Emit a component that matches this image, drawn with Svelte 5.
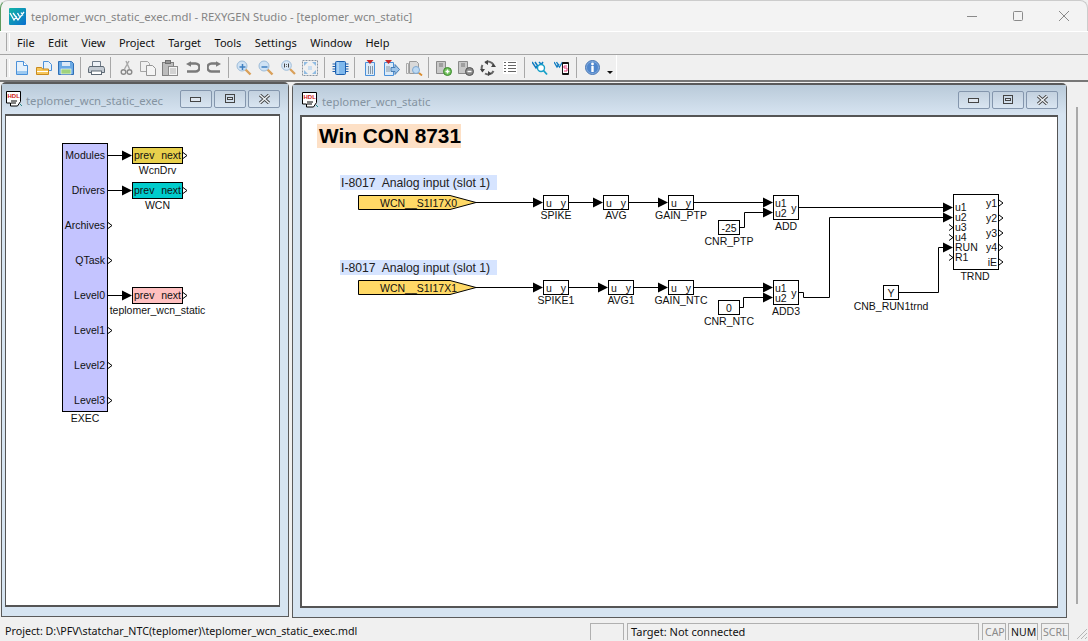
<script>
  const menus = ['File', 'Edit', 'View', 'Project', 'Target', 'Tools', 'Settings', 'Window', 'Help'];

  // task tree on the left window, coordinates are the sheet's own
  const execPins = [
    ['Modules', 155.5], ['Drivers', 190.5], ['Archives', 225.5], ['QTask', 260.5],
    ['Level0', 295.5], ['Level1', 330.5], ['Level2', 365.5], ['Level3', 400.5]
  ];
  const tasks = [
    { name: 'WcnDrv', y: 147.5, fill: '#e8d04c' },
    { name: 'WCN', y: 182.5, fill: '#00cccc' },
    { name: 'teplomer_wcn_static', y: 287.5, fill: '#ffc0c0' }
  ];

  // u/y function blocks
  const blocks = [
    { name: 'SPIKE', x: 543.5, y: 195.5 },
    { name: 'AVG', x: 603.5, y: 195.5 },
    { name: 'GAIN_PTP', x: 668.5, y: 195.5 },
    { name: 'SPIKE1', x: 543.5, y: 280.5 },
    { name: 'AVG1', x: 608.5, y: 280.5 },
    { name: 'GAIN_NTC', x: 668.5, y: 280.5 }
  ];
  const adders = [
    { name: 'ADD', y: 195.5 },
    { name: 'ADD3', y: 280.5 }
  ];
  const constants = [
    { name: 'CNR_PTP', value: '-25', x: 718.5, y: 220.5, w: 21 },
    { name: 'CNR_NTC', value: '0', x: 718.5, y: 300.5, w: 21 },
    { name: 'CNB_RUN1trnd', value: 'Y', x: 883.5, y: 285.5, w: 15 }
  ];
  const inputs = [
    { name: 'WCN__S1I17X0', y: 195.5, rowY: 175 },
    { name: 'WCN__S1I17X1', y: 280.5, rowY: 260 }
  ];
  const wires = [
    'M476 202.5H533', 'M569 202.5H593', 'M629 202.5H658', 'M694 202.5H763',
    'M739 227.5H744.5V212.5H763', 'M799 207.5H943',
    'M476 287.5H533', 'M569 287.5H598', 'M634 287.5H658', 'M694 287.5H763',
    'M739 307.5H743.5V297.5H763', 'M799 292.5H803.5V297.5H829.5V217.5H943',
    'M899 292.5H938.5V247.5H943'
  ];
  const arrows = [
    [543, 202.5], [603, 202.5], [668, 202.5], [773, 202.5], [773, 212.5],
    [543, 287.5], [608, 287.5], [668, 287.5], [773, 287.5], [773, 297.5],
    [953, 207.5], [953, 217.5], [953, 247.5]
  ];
  const trndIn = [['u1', 207.5], ['u2', 217.5], ['u3', 227.5], ['u4', 237.5], ['RUN', 247.5], ['R1', 257.5]];
  const trndOut = [['y1', 203], ['y2', 218], ['y3', 233], ['y4', 247.5], ['iE', 262]];
</script>

{#snippet hdl()}
  <svg class="hdl" width="16" height="16" viewBox="0 0 16 16">
    <path d="M.5.5h14v10l-3 4.5H4.500v-3H.5z" fill="#fff" stroke="#000" />
    <text x="1.500" y="7" class="hdl-text">HDL</text>
    <path d="M5 10h6M5 12h5" stroke="#000" />
    <path d="M14 13l2 2" stroke="#2a8a8a" />
  </svg>
{/snippet}

{#snippet winButtons()}
  <div class="win-buttons">
    <button aria-label="Minimize"><svg width="12" height="8" viewBox="0 0 12 8"><rect x=".5" y="2.500" width="10" height="4" fill="#dfe6ee" stroke="#444" /></svg></button>
    <button aria-label="Restore"><svg width="12" height="10" viewBox="0 0 12 10"><rect x="1.500" y=".5" width="9" height="8" fill="none" stroke="#444" stroke-width="1" /><rect x="3.500" y="3.500" width="5" height="2" fill="#dfe6ee" stroke="#444" /></svg></button>
    <button aria-label="Close"><svg width="13" height="10" viewBox="0 0 13 10"><path d="M2 1l9 8M11 1L2 9" stroke="#444" stroke-width="3.200" /><path d="M2 1l9 8M11 1L2 9" stroke="#eef2f6" stroke-width="1.400" /></svg></button>
  </div>
{/snippet}

<div class="app">
  <header class="titlebar">
    <svg class="logo" width="17" height="17" viewBox="0 0 17 17">
      <defs>
        <linearGradient id="logo-bg" x1="0" y1="0" x2="1" y2="1">
          <stop offset="0" stop-color="#12b5a5" />
          <stop offset="1" stop-color="#0a6fd0" />
        </linearGradient>
      </defs>
      <rect width="17" height="17" rx="1" fill="url(#logo-bg)" />
      <path d="M1 5l4 7 2.500-4M4 5l5 7 6-8M8.500 5l2 3.500M12 4.500l2 3" fill="none" stroke="#fff" stroke-width="1.300" />
    </svg>
    <span class="title-text">teplomer_wcn_static_exec.mdl - REXYGEN Studio - [teplomer_wcn_static]</span>
    <div class="caption">
      <svg width="46" height="31" viewBox="0 0 46 31"><path d="M18 15.500h10" stroke="#8a8a8a" /></svg>
      <svg width="46" height="31" viewBox="0 0 46 31"><rect x="18.500" y="10.500" width="9" height="9" rx="1" fill="none" stroke="#8a8a8a" /></svg>
      <svg width="46" height="31" viewBox="0 0 46 31"><path d="M18 10l10 10M28 10L18 20" stroke="#8a8a8a" /></svg>
    </div>
  </header>

  <nav class="menubar">
    <span class="grip"></span>
    {#each menus as item}
      <span class="menu-item">{item}</span>
    {/each}
  </nav>

  <div class="toolbar">
    <div class="tools">
      <span class="grip"></span>
      <!-- new / open / save -->
      <span class="tool"><svg width="16" height="16" viewBox="0 0 16 16"><path d="M2.500 1.500h7l4 4v9h-11z" fill="#e6f1fb" stroke="#4a90d9" /><path d="M9.500 1.500v4h4" fill="#fff" stroke="#4a90d9" /><rect x="3" y="11" width="10" height="3" fill="#9cc9f0" /></svg></span>
      <span class="tool"><svg width="17" height="16" viewBox="0 0 17 16"><path d="M7.500 1.500h5l3 3v6h-8z" fill="#e6f1fb" stroke="#4a90d9" /><path d="M.5 7.500h5l1 1.500h6v5.500h-12z" fill="#f6c65a" stroke="#c98a1e" /><path d="M1 11.500h11" stroke="#fff" /></svg></span>
      <span class="tool"><svg width="16" height="16" viewBox="0 0 16 16"><path d="M.5 1.500h13l2 2v11H.5z" fill="#6aa9e4" stroke="#2f6fb5" /><rect x="4" y="2" width="8" height="4" fill="#dbe9f7" /><rect x="3" y="9" width="10" height="5" fill="#9fd27c" stroke="#fff" stroke-width=".6" /></svg></span>
      <span class="sep"></span>
      <!-- print -->
      <span class="tool"><svg width="17" height="16" viewBox="0 0 17 16"><path d="M4.500 6.500v-5h8v5" fill="#eef2f7" stroke="#6f7b88" /><path d="M1.500 6.500h14l1 2v4h-16v-4z" fill="#c4cbd3" stroke="#5f6a75" /><rect x="3.500" y="11" width="10" height="3.500" fill="#fff" stroke="#5f6a75" /></svg></span>
      <span class="sep"></span>
      <!-- clipboard, greyed out -->
      <span class="tool"><svg width="13" height="16" viewBox="0 0 13 16"><path d="M9 1L4.500 9M6 1l3.500 8" stroke="#a8a8a8" stroke-width="1.400" fill="none" /><circle cx="3.500" cy="12" r="2.300" fill="none" stroke="#8a8a8a" stroke-width="1.400" /><circle cx="9.500" cy="12" r="2.300" fill="none" stroke="#8a8a8a" stroke-width="1.400" /></svg></span>
      <span class="tool"><svg width="16" height="16" viewBox="0 0 16 16"><path d="M.5 1.500h7l2 2v8h-9z" fill="#f0f0f0" stroke="#a5a5a5" /><path d="M6.500 5.500h6l3 3v7h-9z" fill="#f4f4f4" stroke="#959595" /></svg></span>
      <span class="tool"><svg width="16" height="16" viewBox="0 0 16 16"><rect x=".5" y="2.500" width="11" height="13" fill="#bcbcbc" stroke="#808080" /><rect x="3.500" y=".5" width="5" height="3" fill="#969696" stroke="#707070" /><rect x="6.500" y="6.500" width="9" height="9" fill="#f4f4f4" stroke="#8a8a8a" /><path d="M8 9h6M8 11h6M8 13h6" stroke="#b0b0b0" /></svg></span>
      <span class="tool"><svg width="15" height="14" viewBox="0 0 15 14"><path d="M5 2.500h5.500a3.500 3.500 0 0 1 0 8H2" fill="none" stroke="#7a7a7a" stroke-width="2.600" /><path d="M6 0v5.500L1 2.700z" fill="#7a7a7a" transform="translate(0 .2)" /></svg></span>
      <span class="tool"><svg width="15" height="14" viewBox="0 0 15 14"><path d="M10 2.500H4.500a3.500 3.500 0 0 0 0 8H13" fill="none" stroke="#7a7a7a" stroke-width="2.600" /><path d="M9 0v5.500L14 2.700z" fill="#7a7a7a" transform="translate(0 .2)" /></svg></span>
      <span class="sep"></span>
      <!-- zoom -->
      <span class="tool"><svg width="16" height="16" viewBox="0 0 16 16"><path d="M9.500 9.500l5 5" stroke="#d9a05a" stroke-width="2.400" /><circle cx="6" cy="6" r="5" fill="#cfe2f4" stroke="#9dbcd9" /><path d="M3.500 7h6M6.500 4v6" stroke="#3f7fc0" stroke-width="1.500" /></svg></span>
      <span class="tool"><svg width="16" height="16" viewBox="0 0 16 16"><path d="M9.500 9.500l5 5" stroke="#d9a05a" stroke-width="2.400" /><circle cx="6" cy="6" r="5" fill="#cfe2f4" stroke="#9dbcd9" /><path d="M3.500 7h6" stroke="#3f7fc0" stroke-width="1.500" /></svg></span>
      <span class="tool"><svg width="15" height="15" viewBox="0 0 15 15"><path d="M9 9l5 5" stroke="#d9a05a" stroke-width="2.200" /><circle cx="5.500" cy="5.500" r="4.800" fill="#dbe9f7" stroke="#9dbcd9" /><path d="M3.500 3.500v4M7.500 3.500v4M5.500 4v.8M5.500 6v.8" stroke="#444" /></svg></span>
      <span class="tool"><svg width="16" height="16" viewBox="0 0 16 16"><rect x=".5" y=".5" width="15" height="15" fill="none" stroke="#8a95a0" stroke-dasharray="2 1" /><path d="M2 2h4L2 6zM14 2h-4l4 4zM2 14h4l-4-4zM14 14h-4l4-4z" fill="#8fbbe2" /><rect x="6" y="6" width="4" height="4" fill="#c8ddf0" /></svg></span>
      <span class="sep"></span>
      <!-- compile -->
      <span class="tool"><svg width="17" height="16" viewBox="0 0 17 16"><rect x="3.500" y="1.500" width="10" height="13" rx="1" fill="#7fb8ec" stroke="#1c5fae" /><path d="M.5 4h3M.5 6.500h3M.5 9h3M.5 11.500h3M13.500 4h3M13.500 6.500h3M13.500 9h3M13.500 11.500h3" stroke="#1c5fae" stroke-width="1.200" /><path d="M6 2v12" stroke="#d6e9fa" /></svg></span>
      <span class="sep"></span>
      <!-- target download / upload / inspect -->
      <span class="tool"><svg width="12" height="16" viewBox="0 0 12 16"><path d="M1.500 2.500h9v13h-9z" fill="#dcebf8" stroke="#4a90d9" /><path d="M2.500 0h7L6 4z" fill="#c62828" /><path d="M4 7h1M6 7h1M8 7h1M4 9h1M6 9h1M8 9h1M4 11h1M6 11h1M8 11h1M4 13h1M6 13h1M8 13h1" stroke="#345" /></svg></span>
      <span class="tool"><svg width="16" height="16" viewBox="0 0 16 16"><path d="M.5 2.500h9v13h-9z" fill="#dcebf8" stroke="#4a90d9" /><path d="M1 0h7L4.500 4z" fill="#c62828" /><path d="M2.500 7h1M4.500 7h1M2.500 9h1M4.500 9h1M2.500 11h1M4.500 11h1" stroke="#345" /><path d="M7 7.500h4v-3l4.500 5-4.500 5v-3H7z" fill="#9cc4ea" stroke="#4a7fb5" /></svg></span>
      <span class="tool"><svg width="17" height="16" viewBox="0 0 17 16"><path d="M3.500 1.500h7l2 2v10h-9z" fill="#d9d9d9" stroke="#9a9a9a" /><path d="M.5 3.500h2v10h-2z" fill="#eee" stroke="#aaa" /><circle cx="10" cy="10" r="3.500" fill="#bcd9f3" stroke="#7fa8d0" /><path d="M13 13l3 2.500" stroke="#d98c2e" stroke-width="1.800" /></svg></span>
      <span class="sep"></span>
      <!-- archive add / remove / refresh / list -->
      <span class="tool"><svg width="16" height="16" viewBox="0 0 16 16"><path d="M.5 1.500h9v12h-9z" fill="#c8c8c8" stroke="#8a8a8a" /><path d="M3 4h4M3 6h4" stroke="#777" /><circle cx="11.500" cy="11.500" r="4" fill="#6fbf5a" stroke="#3d8a2e" /><path d="M9.500 11.500h4M11.500 9.500v4" stroke="#fff" stroke-width="1.400" /></svg></span>
      <span class="tool"><svg width="16" height="16" viewBox="0 0 16 16"><path d="M.5 1.500h9v12h-9z" fill="#c8c8c8" stroke="#8a8a8a" /><path d="M3 4h4M3 6h4" stroke="#777" /><circle cx="11.500" cy="11.500" r="4" fill="#8a8a8a" stroke="#555" /><path d="M9.500 11.500h4" stroke="#fff" stroke-width="1.400" /></svg></span>
      <span class="tool"><svg width="16" height="16" viewBox="0 0 16 16"><path d="M5 2.500A6 6 0 0 1 13.500 5M13.500 11A6 6 0 0 1 5 13.500M2.500 11A6 6 0 0 1 2.500 5" fill="none" stroke="#666" stroke-width="2" /><path d="M8 0v5L4.500 2.500zM16 7h-5l2.500-3.500zM8 16v-5l3.500 2.500zM0 9h5L2.500 12.500z" fill="#444" /></svg></span>
      <span class="tool"><svg width="14" height="13" viewBox="0 0 14 13"><rect width="14" height="13" fill="#fff" /><path d="M1 1.500h2M5 1.500h8M1 4.500h2M5 4.500h8M1 7.500h2M5 7.500h8M1 10.500h2M5 10.500h8" stroke="#666" /></svg></span>
      <span class="sep"></span>
      <!-- REX monitor -->
      <span class="tool"><svg width="16" height="16" viewBox="0 0 16 16"><path d="M0 2l4 6 2-3M3 2l4 6 4-6M7 2l2 2" fill="none" stroke="#0f7bc0" stroke-width="1.500" /><circle cx="9" cy="8" r="3.500" fill="#fff" stroke="#16a0c8" stroke-width="1.400" /><path d="M11.500 10.500l3.500 4" stroke="#16a0c8" stroke-width="1.800" /></svg></span>
      <span class="tool"><svg width="16" height="16" viewBox="0 0 16 16"><path d="M0 2l3 5 2-3M2.500 2l3 5 3-5" fill="none" stroke="#0f7bc0" stroke-width="1.400" /><rect x="8" y="2" width="7" height="13" rx="1" fill="#111" /><rect x="9" y="4" width="5" height="9" fill="#fff" /><path d="M13 6h-3v2h3v3h-3" fill="none" stroke="#e23c7a" /></svg></span>
      <span class="sep"></span>
      <!-- about -->
      <span class="tool"><svg width="15" height="15" viewBox="0 0 15 15"><circle cx="7.500" cy="7.500" r="7" fill="#7fa8dc" stroke="#4a78b5" /><circle cx="7.500" cy="7.500" r="5.500" fill="#4f86cc" /><rect x="6.300" y="6" width="2.400" height="6" fill="#fff" /><circle cx="7.500" cy="4" r="1.400" fill="#fff" /></svg></span>
      <svg class="drop" width="6" height="3" viewBox="0 0 6 3"><path d="M0 0h6L3 3z" fill="#111" /></svg>
    </div>
  </div>

  <main class="mdi">
    <section class="child child-exec">
      <div class="child-title">
        {@render hdl()}
        <span class="child-name">teplomer_wcn_static_exec</span>
        {@render winButtons()}
      </div>
      <div class="client">
        <svg class="sheet" width="274" height="490" viewBox="6 116 274 490">
          <rect x="62.500" y="143.500" width="45" height="268" fill="#c4c4ff" stroke="#000" />
          {#each execPins as [label, y]}
            <text x="105" y={y + 3.500} class="lbl end">{label}</text>
            {#if y !== 155.5 && y !== 190.5 && y !== 295.5}
              <path d="M108 {y - 3}l4 3-4 3" fill="#fff" stroke="#000" />
            {/if}
          {/each}
          <text x="85" y="422" class="lbl mid">EXEC</text>
          {#each tasks as task}
            <path d="M108 {task.y + 8}H122" stroke="#000" />
            <path d="M122 {task.y + 3}L132 {task.y + 8}L122 {task.y + 13}z" fill="#000" />
            <rect x="132.500" y={task.y} width="50" height="16" fill={task.fill} stroke="#000" />
            <text x="134" y={task.y + 11.500} class="lbl">prev</text>
            <text x="181" y={task.y + 11.500} class="lbl end">next</text>
            <path d="M183 {task.y + 5}l4 3-4 3" fill="#fff" stroke="#000" />
            <text x="157.500" y={task.y + 26} class="lbl mid">{task.name}</text>
          {/each}
        </svg>
      </div>
    </section>

    <section class="child child-main">
      <div class="child-title">
        {@render hdl()}
        <span class="child-name">teplomer_wcn_static</span>
        {@render winButtons()}
      </div>
      <div class="client">
        <svg class="sheet" width="756" height="490" viewBox="302 117 756 490">
          <rect x="317" y="124" width="144" height="24" fill="#fde0c6" />
          <text x="319" y="143" class="heading">Win CON 8731</text>

          {#each wires as d}
            <path {d} fill="none" stroke="#000" />
          {/each}
          {#each arrows as [x, y]}
            <path d="M{x - 10} {y - 5}L{x} {y}L{x - 10} {y + 5}z" fill="#000" />
          {/each}

          {#each inputs as input}
            <rect x="340" y={input.rowY} width="157" height="15" fill="#d6e4ff" />
            <text x="341" y={input.rowY + 11.500} class="note">I-8017  Analog input (slot 1)</text>
            <path d="M358.500 {input.y}H450L476 {input.y + 7}L450 {input.y + 14}H358.500z" fill="#ffd966" stroke="#000" />
            <text x="380" y={input.y + 11} class="lbl">{input.name}</text>
          {/each}

          {#each blocks as b}
            <rect x={b.x} y={b.y} width="25" height="14" fill="#fff" stroke="#000" />
            <text x={b.x + 2.500} y={b.y + 11} class="lbl">u</text>
            <text x={b.x + 22.500} y={b.y + 11} class="lbl end">y</text>
            <text x={b.x + 12.500} y={b.y + 23} class="lbl mid">{b.name}</text>
          {/each}

          {#each adders as a}
            <rect x="773.500" y={a.y} width="25" height="24" fill="#fff" stroke="#000" />
            <text x="775" y={a.y + 11} class="lbl">u1</text>
            <text x="775" y={a.y + 21} class="lbl">u2</text>
            <text x="796.500" y={a.y + 16} class="lbl end">y</text>
            <text x="786" y={a.y + 34} class="lbl mid">{a.name}</text>
          {/each}

          {#each constants as c}
            <rect x={c.x} y={c.y} width={c.w} height="14" fill="#fff" stroke="#000" />
            <text x={c.x + c.w / 2} y={c.y + 11} class="lbl mid">{c.value}</text>
            <text x={c.x + c.w / 2} y={c.y + 24} class="lbl mid">{c.name}</text>
          {/each}

          <rect x="953.500" y="194.500" width="45" height="75" fill="#fff" stroke="#000" />
          {#each trndIn as [label, y]}
            <text x="955" y={y + 3.500} class="lbl">{label}</text>
            {#if label === 'u3' || label === 'u4' || label === 'R1'}
              <path d="M949 {y - 3}l4 3-4 3" fill="none" stroke="#000" />
            {/if}
          {/each}
          {#each trndOut as [label, y]}
            <text x="997" y={y + 3.500} class="lbl end">{label}</text>
            <path d="M999 {y - 3}l4 3-4 3" fill="#fff" stroke="#000" />
          {/each}
          <text x="975" y="280" class="lbl mid">TRND</text>
        </svg>
      </div>
    </section>

    <span class="edge-bar"></span>
  </main>

  <footer class="statusbar">
    <span class="status-path">Project: D:\PFV\statchar_NTC(teplomer)\teplomer_wcn_static_exec.mdl</span>
    <span class="pane pane-empty"></span>
    <span class="pane pane-target">Target: Not connected</span>
    <span class="pane pane-key off cap">CAP</span>
    <span class="pane pane-key num">NUM</span>
    <span class="pane pane-key off scrl">SCRL</span>
    <svg class="resize" width="14" height="14" viewBox="0 0 14 14"><path d="M13 3L3 13M13 7l-6 6M13 11l-2 2" stroke="#b5b5b5" /></svg>
  </footer>
</div>

<style>
  :global(body) {
    background: #fff;
  }

  .app {
    width: 1088px;
    height: 641px;
    display: flex;
    flex-direction: column;
    overflow: hidden;
    font-family: "Noto Sans", sans-serif;
    font-size: 11px;
    color: #111;
    background: #f0f0f0;
  }

  .titlebar {
    height: 31px;
    flex: none;
    display: flex;
    align-items: center;
    padding-left: 8px;
    background: #f3f3f3;
    border-radius: 8px 8px 0 0;
    box-sizing: border-box;
    border-top: 1px solid #ccc;
    border-right: 1px solid #ccc;
    border-left: 1px solid #5d9a5d;
  }

  .logo {
    margin-right: 5px;
  }

  .title-text {
    color: #858585;
    font-size: 11.300px;
  }

  .caption {
    margin-left: auto;
    display: flex;
  }

  .menubar {
    height: 24px;
    flex: none;
    display: flex;
    align-items: center;
    box-sizing: border-box;
    background: #eeeeee;
    border-top: 1px solid #fff;
    border-bottom: 1px solid #a5a5a5;
    padding: 0 0 2px 6px;
  }

  .menu-item {
    margin-right: 13.500px;
  }

  .grip {
    width: 2px;
    height: 18px;
    border-left: 1px solid #a8a8a8;
    border-right: 1px solid #fff;
    flex: none;
    margin-right: 7px;
  }

  .toolbar {
    height: 27px;
    flex: none;
    display: flex;
    background: #f0f0f0;
    border-bottom: 2px solid #777;
    box-sizing: border-box;
  }

  .tools {
    display: flex;
    align-items: center;
    width: 617px;
    box-sizing: border-box;
    padding-left: 6px;
    border-right: 1px solid #fff;
  }

  .tools .grip {
    margin-right: 1px;
  }

  .tool {
    width: 22px;
    display: flex;
    justify-content: center;
    align-items: center;
  }

  .sep {
    width: 1px;
    height: 21px;
    background: #a8a8a8;
    margin: 0 4px 0 3px;
  }

  .drop {
    margin: 9px 0 0 4px;
  }

  .mdi {
    flex: 1;
    position: relative;
    background: #f0f0f0;
  }

  .child {
    position: absolute;
    box-sizing: border-box;
    display: flex;
    flex-direction: column;
    background: #d6e4f1;
    border: 1px solid #5a5a5a;
    border-top-width: 2px;
    border-radius: 5px 5px 0 0;
  }

  .child-exec {
    left: 1px;
    top: 0;
    width: 288px;
    height: 535px;
    padding: 0 8px 9px 3px;
  }

  .child-main {
    left: 292px;
    top: 1px;
    width: 775px;
    height: 535px;
    padding: 0 8px 9px 7px;
  }

  .child-title {
    height: 30px;
    flex: none;
    display: flex;
    align-items: center;
    margin: 0 -8px 0 -7px;
    padding: 0 8px 0 9px;
    background: linear-gradient(#b9cad9, #d7e4f1);
  }

  .child-exec .child-title {
    margin: 0 -8px 0 -3px;
    padding: 0 8px 0 4px;
  }

  .hdl {
    flex: none;
    margin-right: 4px;
  }

  .hdl-text {
    font-family: "Liberation Sans", sans-serif;
    font-size: 6px;
    font-weight: 700;
    fill: #d01818;
  }

  .child-name {
    color: #8493a1;
    font-size: 11.300px;
    margin-top: 2px;
  }

  .win-buttons {
    margin-left: auto;
    display: flex;
    gap: 2px;
  }

  .win-buttons button {
    width: 32px;
    height: 18px;
    padding: 0;
    display: flex;
    align-items: center;
    justify-content: center;
    background: linear-gradient(#c3d1df, #d9e5f1);
    border: 1px solid #8496ad;
    border-radius: 2px;
  }

  .client {
    flex: 1;
    min-height: 0;
    box-sizing: border-box;
    background: #fff;
    border: 1px solid #555;
    border-top-width: 2px;
    border-bottom-width: 2px;
    overflow: hidden;
  }

  .child-main .client {
    border-left-width: 2px;
  }

  .sheet {
    display: block;
  }

  .lbl,
  .note,
  .heading {
    font-family: "Liberation Sans", sans-serif;
    fill: #111;
    white-space: pre;
  }

  .lbl {
    font-size: 10.500px;
  }

  .mid {
    text-anchor: middle;
  }

  .end {
    text-anchor: end;
  }

  .note {
    font-size: 12.200px;
    fill: #222;
  }

  .heading {
    font-size: 20.800px;
    font-weight: 700;
    fill: #000;
  }

  .edge-bar {
    position: absolute;
    left: 1076px;
    top: 25px;
    bottom: 16px;
    width: 2px;
    background: #a9a9a9;
  }

  .statusbar {
    height: 21px;
    flex: none;
    display: flex;
    align-items: center;
    gap: 3px;
    box-sizing: border-box;
    padding: 2px 0 1px 5px;
    background: #f0f0f0;
    font-size: 11px;
  }

  .status-path {
    width: 582px;
    flex: none;
    white-space: nowrap;
    font-size: 10.700px;
  }

  .pane {
    height: 17px;
    box-sizing: border-box;
    border: 1px solid #b0b0b0;
    border-bottom: 0;
    line-height: 16px;
    flex: none;
    padding-left: 3px;
    overflow: hidden;
    white-space: nowrap;
  }

  .pane-empty {
    width: 34px;
  }

  .pane-target {
    width: 352px;
  }

  .pane-key {
    padding-left: 2px;
    font-size: 10.500px;
    color: #111;
  }

  .cap {
    width: 24px;
  }

  .num {
    width: 30px;
    margin-left: -1px;
  }

  .scrl {
    width: 28px;
    padding-left: 1px;
  }

  .pane-key.off {
    color: #8a8a8a;
  }

  .resize {
    margin-left: 2px;
    margin-top: 4px;
  }
</style>
